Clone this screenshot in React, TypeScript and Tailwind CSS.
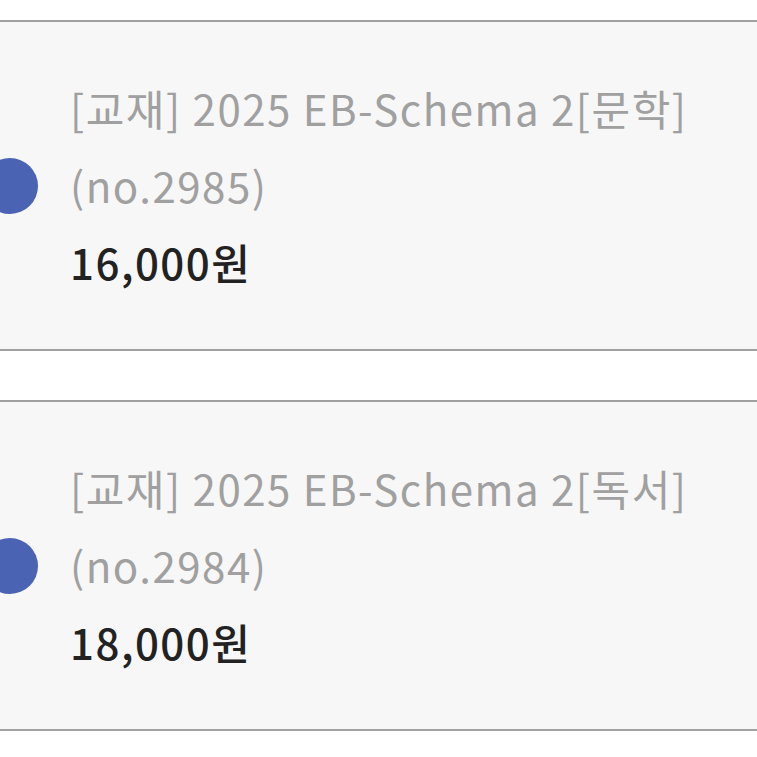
const items = [
  { title: "[교재] 2025 EB-Schema 2[문학]", no: "(no.2985)", price: "16,000원" },
  { title: "[교재] 2025 EB-Schema 2[독서]", no: "(no.2984)", price: "18,000원" },
];

export default function App() {
  return (
    <div
      className="min-h-screen bg-white pt-[20px] flex flex-col gap-[49px]"
      style={{ fontFamily: '"Noto Sans CJK KR", "Noto Sans", sans-serif' }}
    >
      {items.map((item) => (
        <div
          key={item.no}
          className="bg-[#f7f7f7] border-y-[2px] border-[#a0a0a0] h-[331px] flex items-center overflow-hidden"
        >
          <div className="w-[56px] h-[56px] rounded-full bg-[#4a63b3] -ml-[18px] shrink-0" />
          <div className="ml-[32px] text-[42px] leading-[77px] -mt-[2px]">
            <p className="text-[#a0a0a0] tracking-[1.5px]">{item.title}</p>
            <p className="text-[#a0a0a0] tracking-[1.5px]">{item.no}</p>
            <p className="text-[#222] font-medium tracking-[1.5px]">{item.price}</p>
          </div>
        </div>
      ))}
    </div>
  );
}
